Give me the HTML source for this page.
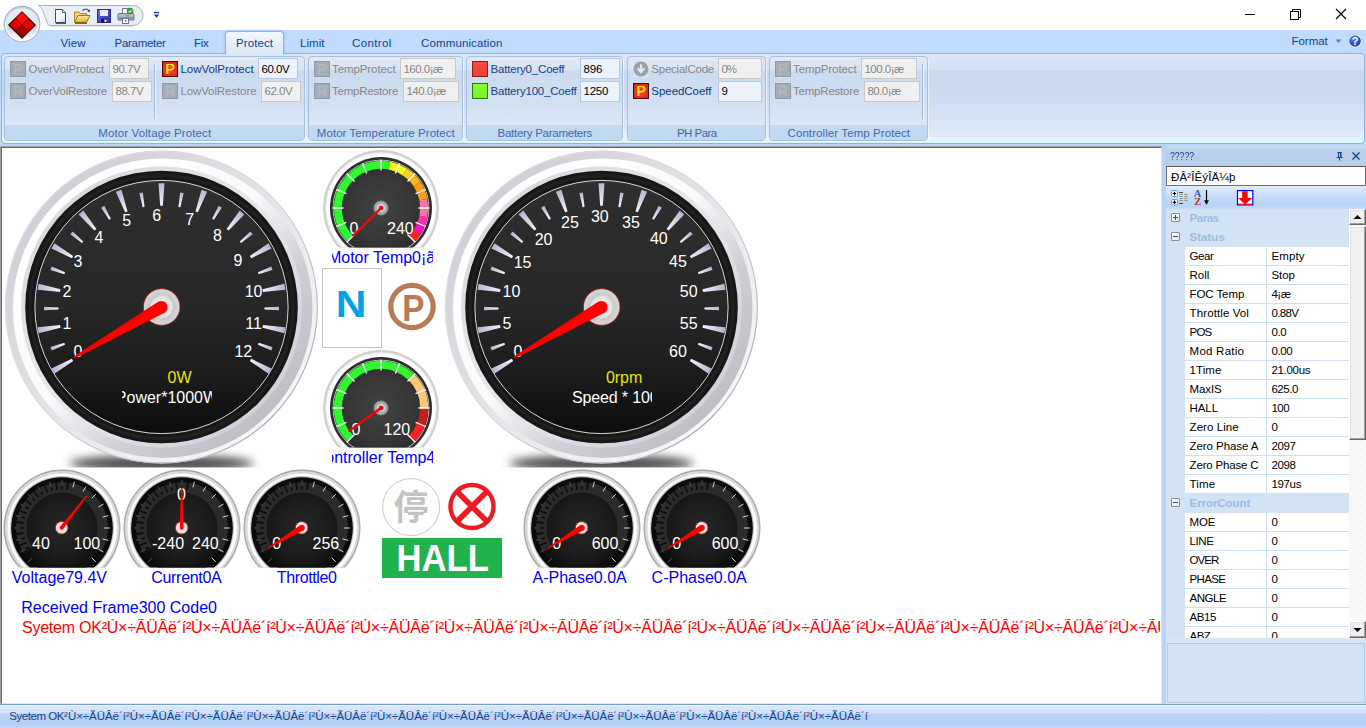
<!DOCTYPE html>
<html><head><meta charset="utf-8"><title>Controller</title>
<style>
*{box-sizing:border-box;margin:0;padding:0}
html,body{width:1366px;height:728px;overflow:hidden;background:#fff;font-family:"Liberation Sans",sans-serif;font-size:12px;color:#15428b}
div,span,svg{position:absolute}
.t{white-space:pre;height:16px;line-height:16px;font-size:11.5px;color:#15428b}
.t.dis{color:#878787}
.t.blk{color:#000}
.t.cap{color:#3e6aaa}
.t.b{color:#0f3a80}
.t.gh{color:#9ebce0;font-weight:bold}
.a16{font-size:16px;height:18px;line-height:18px;white-space:pre}
.blue{color:#0000ff}
.red{color:#ff0000}
#tabrow{left:0;top:30px;width:1366px;height:24px;background:#bfdbff}
#tabsel{left:225px;top:31px;width:59px;height:24px;border:1px solid #8db2e3;border-bottom:none;border-radius:4px 4px 0 0;background:linear-gradient(#f3f8fe,#e4edf9 55%,#dce8f6);box-shadow:0 0 3px rgba(120,160,220,.55)}
#tabsel:after{content:'';position:absolute;left:-3px;right:-3px;bottom:-1px;height:2px;background:linear-gradient(90deg,rgba(219,231,246,0),#dbe7f6 4px,#dbe7f6 calc(100% - 4px),rgba(219,231,246,0))}
#ribbon{left:0;top:53px;width:1366px;height:93px;background:#bfdbff}
#cat{left:1px;top:0px;width:1364px;height:91px;border:1px solid #8db2e3;border-radius:4px;background:linear-gradient(#dbe7f6 0,#d3e1f2 17%,#c8d9ee 19%,#cddcf0 50%,#dbe8f7 85%,#e5f3ff 96%,#d8f7ff 100%)}
.grp{top:56px;height:85px;border:1px solid #a5c0e0;border-radius:4px;background:linear-gradient(#e1eaf6 0,#d8e4f3 15%,#cbdbef 17%,#d0dff1 50%,#dbe7f5 80%,#dce8f6 100%);box-shadow:1px 1px 0 rgba(255,255,255,.55)}
.grp i{position:absolute;left:0;right:0;bottom:0;height:15px;background:#c3d8f1;border-radius:0 0 3px 3px}
.ed{height:21px;border:1px solid #b3c9e6;background:#ecf3fc}
.ed.dis{background:#f0f0f0;border-color:#c8c8c8}
.ico{width:16px;height:16px}
.ico.dis{background:#a6adb5;border:1px solid #939aa2;color:#b3bac1;font-size:14px;line-height:14px;text-align:center}
.pico{background:radial-gradient(circle at 50% 55%,#ff4a38,#e02c1e 70%,#c82418);border:1px solid #4a0c06;color:#ffee00;font-size:14px;line-height:14px;text-align:center;text-shadow:.3px 0 0 #ffee00}
.sep{width:1px;background:#9db9dc;box-shadow:1px 0 0 rgba(255,255,255,.7)}
#below{left:0;top:144px;width:1366px;height:561px;background:#bad4f8}
#main{left:0;top:146px;width:1162px;height:558px;background:#fff;border-top:1px solid #a0a0a0;border-left:1px solid #a0a0a0;overflow:hidden}
#main2{left:0;top:0;width:1161px;height:557px;border-top:1px solid #696969;border-left:1px solid #696969;border-right:1px solid #e3e3e3;border-bottom:1px solid #e3e3e3}
#status{left:0;top:704px;width:1366px;height:24px;border-top:1px solid #7a9cc9;background:linear-gradient(#ffffff 0,#d9e8fb 5%,#cfe1f9 35%,#b9d2f5 40%,#b5cff3 85%,#c3d8f5 100%)}
.yel{color:#e6e600}.wht{color:#fff}

#pcap{left:1166px;top:146px;width:200px;height:20px;background:linear-gradient(#c7d8ee,#bacfe9 20%,#b9cee8);border-top:1px solid #cfdef2}
#pedit{left:1166px;top:166px;width:200px;height:20px;background:#fff;border:1px solid #6f6f6f;border-top-color:#5a5a5a}
#ptool{left:1166px;top:186px;width:200px;height:23px;z-index:2;background:linear-gradient(#e0ecfb,#d0e1fa 30%,#bbd4f8 72%,#b9d3f8 88%,#c8dcfa)}
#pgrid{left:1166px;top:208px;width:183px;height:430px;background:#d3e3f3;overflow:hidden}
.prow{left:19px;width:164px;height:19px;background:#fff;border-bottom:1px solid #d0dff1}
.prow b{position:absolute;left:81px;top:0;width:1px;height:19px;background:#d0dff1}
.pbox{width:9px;height:9px;border:1px solid #8a8d92;background:linear-gradient(135deg,#fff,#e4e9f0);border-radius:1px}
.pbox:before{content:"";position:absolute;left:1px;top:3px;width:5px;height:1px;background:#2a489a}
.pbox.plus:after{content:"";position:absolute;left:3px;top:1px;width:1px;height:5px;background:#2a489a}
#pscroll{left:1349px;top:209px;width:17px;height:429px;background:#f2f2f2;background-image:linear-gradient(45deg,#fff 25%,transparent 25%,transparent 75%,#fff 75%),linear-gradient(45deg,#fff 25%,transparent 25%,transparent 75%,#fff 75%);background-size:2px 2px;background-position:0 0,1px 1px}
.sbtn{left:0;width:17px;background:#f0f0f0;border:1px solid;border-color:#fff #696969 #696969 #fff;box-shadow:inset -1px -1px 0 #a0a0a0,inset 1px 1px 0 #e3e3e3}
#pdesc{left:1166px;top:638px;width:200px;height:66px;background:#d8e5f5}
#pdesc i{position:absolute;left:1px;top:5px;width:198px;height:60px;border:1px solid #b4cae6;background:#d3e3f3}
</style></head><body>
<div id="tabrow"></div>
<div id="ribbon"><div id="cat"></div></div>
<div id="tabsel"></div>
<span class="t " style="left:60.4px;top:35px;letter-spacing:0.12px">View</span>
<span class="t " style="left:114.6px;top:35px;letter-spacing:-0.30px">Parameter</span>
<span class="t " style="left:194px;top:35px;letter-spacing:-0.25px">Fix</span>
<span class="t " style="left:236px;top:35px;letter-spacing:0.09px">Protect</span>
<span class="t " style="left:300px;top:35px;letter-spacing:0.06px">Limit</span>
<span class="t " style="left:352px;top:35px;letter-spacing:0.36px">Control</span>
<span class="t " style="left:421px;top:35px;letter-spacing:0.13px">Communication</span>
<span class="t " style="left:1291.6px;top:33px;letter-spacing:-0.07px">Format</span>
<div class="grp" style="left:4px;width:301px"><i></i></div>
<span class="t cap" style="left:98.2px;top:125px;letter-spacing:0.12px">Motor Voltage Protect</span>
<div class="grp" style="left:308px;width:155px"><i></i></div>
<span class="t cap" style="left:316.8px;top:125px;letter-spacing:0.06px">Motor Temperature Protect</span>
<div class="grp" style="left:466px;width:157px"><i></i></div>
<span class="t cap" style="left:497.5px;top:125px;letter-spacing:-0.25px">Battery Parameters</span>
<div class="grp" style="left:627px;width:139px"><i></i></div>
<span class="t cap" style="left:677.0px;top:125px;letter-spacing:-0.55px">PH Para</span>
<div class="grp" style="left:769px;width:159px"><i></i></div>
<span class="t cap" style="left:787.5px;top:125px;letter-spacing:0.09px">Controller Temp Protect</span>
<div class="ico dis" style="left:10px;top:61px">P</div>
<span class="t dis" style="left:28.4px;top:61px;letter-spacing:-0.12px">OverVolProtect</span>
<div class="ed dis" style="left:109px;top:58px;width:40px"></div>
<span class="t dis" style="left:112.5px;top:61px;letter-spacing:-0.49px">90.7V</span>
<div class="ico dis" style="left:10px;top:83px">R</div>
<span class="t dis" style="left:28.4px;top:83px;letter-spacing:-0.18px">OverVolRestore</span>
<div class="ed dis" style="left:112px;top:81px;width:40px"></div>
<span class="t dis" style="left:115.5px;top:83.2px;letter-spacing:-0.49px">88.7V</span>
<div class="sep" style="left:154px;top:64px;height:55px"></div>
<div class="ico pico" style="left:162px;top:61px">P</div>
<span class="t b" style="left:180.4px;top:61px;letter-spacing:-0.02px">LowVolProtect</span>
<div class="ed" style="left:258px;top:58px;width:40px"></div>
<span class="t blk" style="left:261.5px;top:61px;letter-spacing:-0.49px">60.0V</span>
<div class="ico dis" style="left:162px;top:83px">R</div>
<span class="t dis" style="left:180.4px;top:83px;letter-spacing:-0.10px">LowVolRestore</span>
<div class="ed dis" style="left:261px;top:81px;width:40px"></div>
<span class="t dis" style="left:264.5px;top:83.2px;letter-spacing:-0.49px">62.0V</span>
<div class="ico dis" style="left:314px;top:61px">P</div>
<span class="t dis" style="left:332px;top:61px;letter-spacing:-0.09px">TempProtect</span>
<div class="ed dis" style="left:400px;top:58px;width:56px"></div>
<span class="t dis" style="left:403.5px;top:61px;letter-spacing:-0.53px">160.0¡æ</span>
<div class="ico dis" style="left:314px;top:83px">R</div>
<span class="t dis" style="left:332px;top:83px;letter-spacing:-0.21px">TempRestore</span>
<div class="ed dis" style="left:403px;top:81px;width:56px"></div>
<span class="t dis" style="left:406.5px;top:83.2px;letter-spacing:-0.53px">140.0¡æ</span>
<div class="ico" style="left:472px;top:61px;background:linear-gradient(#ff4a3c,#f04034);border:1px solid #8a2018"></div>
<span class="t " style="left:490.5px;top:61px;letter-spacing:-0.19px">Battery0_Coeff</span>
<div class="ed" style="left:580px;top:58px;width:40px"></div>
<span class="t blk" style="left:583.5px;top:61px;letter-spacing:-0.20px">896</span>
<div class="ico" style="left:472px;top:83px;background:linear-gradient(#84ff34,#74f028);border:1px solid #2a7a10"></div>
<span class="t " style="left:490.5px;top:83px;letter-spacing:-0.21px">Battery100_Coeff</span>
<div class="ed" style="left:580px;top:81px;width:40px"></div>
<span class="t blk" style="left:583.5px;top:83.2px;letter-spacing:-0.25px">1250</span>
<svg class="ico" style="left:633px;top:61px" width="16" height="16" viewBox="0 0 16 16"><rect width="16" height="16" fill="#d9e4f2"/><circle cx="8" cy="8" r="7.6" fill="#9aa1a9"/><path d="M8 3.2v6.5M4.8 7.2l3.2 3.8 3.2-3.8" fill="none" stroke="#e4e9ef" stroke-width="2.2"/></svg>
<span class="t dis" style="left:651.3px;top:61px;letter-spacing:-0.23px">SpecialCode</span>
<div class="ed dis" style="left:718px;top:58px;width:44px"></div>
<span class="t dis" style="left:721.5px;top:61px;letter-spacing:-1.21px">0%</span>
<div class="ico pico" style="left:633px;top:83px">P</div>
<span class="t b" style="left:651.3px;top:83px;letter-spacing:-0.04px">SpeedCoeff</span>
<div class="ed" style="left:718px;top:81px;width:44px"></div>
<span class="t blk" style="left:721.5px;top:83.2px;letter-spacing:-0.10px">9</span>
<div class="ico dis" style="left:775px;top:61px">P</div>
<span class="t dis" style="left:793px;top:61px;letter-spacing:-0.09px">TempProtect</span>
<div class="ed dis" style="left:861px;top:58px;width:56px"></div>
<span class="t dis" style="left:864.5px;top:61px;letter-spacing:-0.53px">100.0¡æ</span>
<div class="ico dis" style="left:775px;top:83px">R</div>
<span class="t dis" style="left:793px;top:83px;letter-spacing:-0.21px">TempRestore</span>
<div class="ed dis" style="left:864px;top:81px;width:56px"></div>
<span class="t dis" style="left:867.5px;top:83.2px;letter-spacing:-0.56px">80.0¡æ</span>
<div class="sep" style="left:922px;top:64px;height:55px"></div>
<div id="below"></div>
<div id="main"><div id="main2"></div><div style="left:-1px;top:-147px;width:1366px;height:728px"><svg style="left:0;top:0" width="1366" height="728" viewBox="0 0 1366 728" font-family="Liberation Sans, sans-serif"><defs>
<linearGradient id="rimA" x1=".15" y1=".15" x2=".85" y2=".85"><stop offset="0" stop-color="#d2ced6"/><stop offset=".5" stop-color="#e6e4e8"/><stop offset="1" stop-color="#f6f6f8"/></linearGradient>
<linearGradient id="rimE" x1=".15" y1=".15" x2=".85" y2=".85"><stop offset="0" stop-color="#dedae2"/><stop offset=".5" stop-color="#dcdae0"/><stop offset="1" stop-color="#b2aeb6"/></linearGradient>
<linearGradient id="rimB" x1=".15" y1=".15" x2=".85" y2=".85"><stop offset="0" stop-color="#ffffff"/><stop offset=".45" stop-color="#fafafb"/><stop offset=".72" stop-color="#d2ced6"/><stop offset="1" stop-color="#c2bec6"/></linearGradient>
<linearGradient id="rimC" x1=".15" y1=".15" x2=".85" y2=".85"><stop offset="0" stop-color="#dcdce0"/><stop offset=".5" stop-color="#e8e8ec"/><stop offset="1" stop-color="#d4d0d8"/></linearGradient>
<linearGradient id="face" x1="0" y1="0" x2="0" y2="1"><stop offset="0" stop-color="#2f2f2f"/><stop offset=".5" stop-color="#272727"/><stop offset=".8" stop-color="#1a1a1a"/><stop offset="1" stop-color="#0c0c0c"/></linearGradient>
<linearGradient id="tick" x1="0" y1="0" x2="1" y2="0"><stop offset="0" stop-color="#f4f4fa"/><stop offset="1" stop-color="#b4b4d0"/></linearGradient>
<radialGradient id="hub" cx=".5" cy=".5" r=".5"><stop offset="0" stop-color="#f0f0f0"/><stop offset=".55" stop-color="#e4e4e4"/><stop offset=".66" stop-color="#cacaca"/><stop offset="1" stop-color="#d8d8d8"/></radialGradient>
<radialGradient id="mface" cx=".5" cy=".5" r=".5"><stop offset="0" stop-color="#424242"/><stop offset=".7" stop-color="#363636"/><stop offset="1" stop-color="#2c2c2c"/></radialGradient>
<radialGradient id="sface" cx=".5" cy=".5" r=".5"><stop offset="0" stop-color="#262626"/><stop offset=".6" stop-color="#1c1c1c"/><stop offset="1" stop-color="#0c0c0c"/></radialGradient>
<filter id="blur" x="-20%" y="-100%" width="140%" height="300%"><feGaussianBlur stdDeviation="5"/></filter>
<clipPath id="cb1"><rect x="2" y="148" width="318" height="319.500"/></clipPath>
<clipPath id="cb2"><rect x="442" y="148" width="318" height="319.500"/></clipPath>
<clipPath id="cm1"><rect x="322" y="148" width="118" height="99.500"/></clipPath>
<clipPath id="cm2"><rect x="322" y="348" width="118" height="99.500"/></clipPath>
<clipPath id="cs"><rect x="2" y="468" width="760" height="99.500"/></clipPath>
</defs>
<g clip-path="url(#cb1)">
<ellipse cx="161.5" cy="463.5" rx="92" ry="8.500" fill="#4c4c4c" filter="url(#blur)"/>
<circle cx="161.5" cy="307" r="156.500" fill="url(#rimA)"/>
<circle cx="161.5" cy="307" r="155.900" fill="none" stroke="url(#rimE)" stroke-width="1.200"/>
<circle cx="162.7" cy="308.2" r="149.800" fill="url(#rimB)"/>
<circle cx="161.5" cy="307" r="138.300" fill="none" stroke="url(#rimC)" stroke-width="4.500"/>
<circle cx="161.5" cy="307" r="136.300" fill="#171717"/>
<circle cx="161.5" cy="307" r="131.500" fill="none" stroke="#202020" stroke-width="3"/>
<circle cx="161.5" cy="307" r="126.600" fill="url(#face)" stroke="#ececec" stroke-width=".9"/>
<polygon points="125.3,-3.0 125.3,3.0 102.8,1.3 102.8,-1.3" transform="translate(161.5,308.5) rotate(-210)" fill="url(#tick)"/>
<polygon points="117.5,-1.8 117.5,1.8 103,1.0 103,-1.0" transform="translate(161.5,308.5) rotate(-200)" fill="url(#tick)"/>
<polygon points="125.3,-3.0 125.3,3.0 102.8,1.3 102.8,-1.3" transform="translate(161.5,308.5) rotate(-190)" fill="url(#tick)"/>
<polygon points="117.5,-1.8 117.5,1.8 103,1.0 103,-1.0" transform="translate(161.5,308.5) rotate(-180)" fill="url(#tick)"/>
<polygon points="125.3,-3.0 125.3,3.0 102.8,1.3 102.8,-1.3" transform="translate(161.5,308.5) rotate(-170)" fill="url(#tick)"/>
<polygon points="117.5,-1.8 117.5,1.8 103,1.0 103,-1.0" transform="translate(161.5,308.5) rotate(-160)" fill="url(#tick)"/>
<polygon points="125.3,-3.0 125.3,3.0 102.8,1.3 102.8,-1.3" transform="translate(161.5,308.5) rotate(-150)" fill="url(#tick)"/>
<polygon points="117.5,-1.8 117.5,1.8 103,1.0 103,-1.0" transform="translate(161.5,308.5) rotate(-140)" fill="url(#tick)"/>
<polygon points="125.3,-3.0 125.3,3.0 102.8,1.3 102.8,-1.3" transform="translate(161.5,308.5) rotate(-130)" fill="url(#tick)"/>
<polygon points="117.5,-1.8 117.5,1.8 103,1.0 103,-1.0" transform="translate(161.5,308.5) rotate(-120)" fill="url(#tick)"/>
<polygon points="125.3,-3.0 125.3,3.0 102.8,1.3 102.8,-1.3" transform="translate(161.5,308.5) rotate(-110)" fill="url(#tick)"/>
<polygon points="117.5,-1.8 117.5,1.8 103,1.0 103,-1.0" transform="translate(161.5,308.5) rotate(-100)" fill="url(#tick)"/>
<polygon points="125.3,-3.0 125.3,3.0 102.8,1.3 102.8,-1.3" transform="translate(161.5,308.5) rotate(-90)" fill="url(#tick)"/>
<polygon points="117.5,-1.8 117.5,1.8 103,1.0 103,-1.0" transform="translate(161.5,308.5) rotate(-80)" fill="url(#tick)"/>
<polygon points="125.3,-3.0 125.3,3.0 102.8,1.3 102.8,-1.3" transform="translate(161.5,308.5) rotate(-70)" fill="url(#tick)"/>
<polygon points="117.5,-1.8 117.5,1.8 103,1.0 103,-1.0" transform="translate(161.5,308.5) rotate(-60)" fill="url(#tick)"/>
<polygon points="125.3,-3.0 125.3,3.0 102.8,1.3 102.8,-1.3" transform="translate(161.5,308.5) rotate(-50)" fill="url(#tick)"/>
<polygon points="117.5,-1.8 117.5,1.8 103,1.0 103,-1.0" transform="translate(161.5,308.5) rotate(-40)" fill="url(#tick)"/>
<polygon points="125.3,-3.0 125.3,3.0 102.8,1.3 102.8,-1.3" transform="translate(161.5,308.5) rotate(-30)" fill="url(#tick)"/>
<polygon points="117.5,-1.8 117.5,1.8 103,1.0 103,-1.0" transform="translate(161.5,308.5) rotate(-20)" fill="url(#tick)"/>
<polygon points="125.3,-3.0 125.3,3.0 102.8,1.3 102.8,-1.3" transform="translate(161.5,308.5) rotate(-10)" fill="url(#tick)"/>
<polygon points="117.5,-1.8 117.5,1.8 103,1.0 103,-1.0" transform="translate(161.5,308.5) rotate(0)" fill="url(#tick)"/>
<polygon points="125.3,-3.0 125.3,3.0 102.8,1.3 102.8,-1.3" transform="translate(161.5,308.5) rotate(10)" fill="url(#tick)"/>
<polygon points="117.5,-1.8 117.5,1.8 103,1.0 103,-1.0" transform="translate(161.5,308.5) rotate(20)" fill="url(#tick)"/>
<polygon points="125.3,-3.0 125.3,3.0 102.8,1.3 102.8,-1.3" transform="translate(161.5,308.5) rotate(30)" fill="url(#tick)"/>
<text x="78" y="356.8" text-anchor="middle" font-size="16" fill="#fff">0</text>
<text x="67" y="328.5" text-anchor="middle" font-size="16" fill="#fff">1</text>
<text x="67" y="296.8" text-anchor="middle" font-size="16" fill="#fff">2</text>
<text x="78" y="266.8" text-anchor="middle" font-size="16" fill="#fff">3</text>
<text x="99" y="242.8" text-anchor="middle" font-size="16" fill="#fff">4</text>
<text x="126.8" y="225.8" text-anchor="middle" font-size="16" fill="#fff">5</text>
<text x="156.7" y="220.8" text-anchor="middle" font-size="16" fill="#fff">6</text>
<text x="189.7" y="224.5" text-anchor="middle" font-size="16" fill="#fff">7</text>
<text x="217.4" y="241.4" text-anchor="middle" font-size="16" fill="#fff">8</text>
<text x="238" y="265.5" text-anchor="middle" font-size="16" fill="#fff">9</text>
<text x="253.6" y="296.8" text-anchor="middle" font-size="16" fill="#fff">10</text>
<text x="253.6" y="328.5" text-anchor="middle" font-size="16" fill="#fff">11</text>
<text x="243.3" y="357.1" text-anchor="middle" font-size="16" fill="#fff">12</text>
<circle cx="161.7" cy="307" r="18.300" fill="url(#hub)" stroke="#a01818" stroke-width=".8"/>
<path d="M158.6 301.5 L73.8 356.6 L74.8 358.4 L165.0 312.5 A6.4 6.4 0 0 0 158.6 301.5 Z" fill="#ff0000"/>
</g>
<g clip-path="url(#cb2)">
<ellipse cx="601.5" cy="463.5" rx="92" ry="8.500" fill="#4c4c4c" filter="url(#blur)"/>
<circle cx="601.5" cy="307" r="156.500" fill="url(#rimA)"/>
<circle cx="601.5" cy="307" r="155.900" fill="none" stroke="url(#rimE)" stroke-width="1.200"/>
<circle cx="602.7" cy="308.2" r="149.800" fill="url(#rimB)"/>
<circle cx="601.5" cy="307" r="138.300" fill="none" stroke="url(#rimC)" stroke-width="4.500"/>
<circle cx="601.5" cy="307" r="136.300" fill="#171717"/>
<circle cx="601.5" cy="307" r="131.500" fill="none" stroke="#202020" stroke-width="3"/>
<circle cx="601.5" cy="307" r="126.600" fill="url(#face)" stroke="#ececec" stroke-width=".9"/>
<polygon points="125.3,-3.0 125.3,3.0 102.8,1.3 102.8,-1.3" transform="translate(601.5,308.5) rotate(-210)" fill="url(#tick)"/>
<polygon points="117.5,-1.8 117.5,1.8 103,1.0 103,-1.0" transform="translate(601.5,308.5) rotate(-200)" fill="url(#tick)"/>
<polygon points="125.3,-3.0 125.3,3.0 102.8,1.3 102.8,-1.3" transform="translate(601.5,308.5) rotate(-190)" fill="url(#tick)"/>
<polygon points="117.5,-1.8 117.5,1.8 103,1.0 103,-1.0" transform="translate(601.5,308.5) rotate(-180)" fill="url(#tick)"/>
<polygon points="125.3,-3.0 125.3,3.0 102.8,1.3 102.8,-1.3" transform="translate(601.5,308.5) rotate(-170)" fill="url(#tick)"/>
<polygon points="117.5,-1.8 117.5,1.8 103,1.0 103,-1.0" transform="translate(601.5,308.5) rotate(-160)" fill="url(#tick)"/>
<polygon points="125.3,-3.0 125.3,3.0 102.8,1.3 102.8,-1.3" transform="translate(601.5,308.5) rotate(-150)" fill="url(#tick)"/>
<polygon points="117.5,-1.8 117.5,1.8 103,1.0 103,-1.0" transform="translate(601.5,308.5) rotate(-140)" fill="url(#tick)"/>
<polygon points="125.3,-3.0 125.3,3.0 102.8,1.3 102.8,-1.3" transform="translate(601.5,308.5) rotate(-130)" fill="url(#tick)"/>
<polygon points="117.5,-1.8 117.5,1.8 103,1.0 103,-1.0" transform="translate(601.5,308.5) rotate(-120)" fill="url(#tick)"/>
<polygon points="125.3,-3.0 125.3,3.0 102.8,1.3 102.8,-1.3" transform="translate(601.5,308.5) rotate(-110)" fill="url(#tick)"/>
<polygon points="117.5,-1.8 117.5,1.8 103,1.0 103,-1.0" transform="translate(601.5,308.5) rotate(-100)" fill="url(#tick)"/>
<polygon points="125.3,-3.0 125.3,3.0 102.8,1.3 102.8,-1.3" transform="translate(601.5,308.5) rotate(-90)" fill="url(#tick)"/>
<polygon points="117.5,-1.8 117.5,1.8 103,1.0 103,-1.0" transform="translate(601.5,308.5) rotate(-80)" fill="url(#tick)"/>
<polygon points="125.3,-3.0 125.3,3.0 102.8,1.3 102.8,-1.3" transform="translate(601.5,308.5) rotate(-70)" fill="url(#tick)"/>
<polygon points="117.5,-1.8 117.5,1.8 103,1.0 103,-1.0" transform="translate(601.5,308.5) rotate(-60)" fill="url(#tick)"/>
<polygon points="125.3,-3.0 125.3,3.0 102.8,1.3 102.8,-1.3" transform="translate(601.5,308.5) rotate(-50)" fill="url(#tick)"/>
<polygon points="117.5,-1.8 117.5,1.8 103,1.0 103,-1.0" transform="translate(601.5,308.5) rotate(-40)" fill="url(#tick)"/>
<polygon points="125.3,-3.0 125.3,3.0 102.8,1.3 102.8,-1.3" transform="translate(601.5,308.5) rotate(-30)" fill="url(#tick)"/>
<polygon points="117.5,-1.8 117.5,1.8 103,1.0 103,-1.0" transform="translate(601.5,308.5) rotate(-20)" fill="url(#tick)"/>
<polygon points="125.3,-3.0 125.3,3.0 102.8,1.3 102.8,-1.3" transform="translate(601.5,308.5) rotate(-10)" fill="url(#tick)"/>
<polygon points="117.5,-1.8 117.5,1.8 103,1.0 103,-1.0" transform="translate(601.5,308.5) rotate(0)" fill="url(#tick)"/>
<polygon points="125.3,-3.0 125.3,3.0 102.8,1.3 102.8,-1.3" transform="translate(601.5,308.5) rotate(10)" fill="url(#tick)"/>
<polygon points="117.5,-1.8 117.5,1.8 103,1.0 103,-1.0" transform="translate(601.5,308.5) rotate(20)" fill="url(#tick)"/>
<polygon points="125.3,-3.0 125.3,3.0 102.8,1.3 102.8,-1.3" transform="translate(601.5,308.5) rotate(30)" fill="url(#tick)"/>
<text x="518" y="356.8" text-anchor="middle" font-size="16" fill="#fff">0</text>
<text x="507" y="328.5" text-anchor="middle" font-size="16" fill="#fff">5</text>
<text x="511.4" y="296.8" text-anchor="middle" font-size="16" fill="#fff">10</text>
<text x="522.6" y="268.2" text-anchor="middle" font-size="16" fill="#fff">15</text>
<text x="543.6" y="244.6" text-anchor="middle" font-size="16" fill="#fff">20</text>
<text x="570" y="228.0" text-anchor="middle" font-size="16" fill="#fff">25</text>
<text x="599.8" y="222.2" text-anchor="middle" font-size="16" fill="#fff">30</text>
<text x="631" y="228.0" text-anchor="middle" font-size="16" fill="#fff">35</text>
<text x="658.8" y="243.7" text-anchor="middle" font-size="16" fill="#fff">40</text>
<text x="678" y="266.8" text-anchor="middle" font-size="16" fill="#fff">45</text>
<text x="688.7" y="296.8" text-anchor="middle" font-size="16" fill="#fff">50</text>
<text x="688.7" y="328.5" text-anchor="middle" font-size="16" fill="#fff">55</text>
<text x="678" y="357.1" text-anchor="middle" font-size="16" fill="#fff">60</text>
<circle cx="601.7" cy="307" r="18.300" fill="url(#hub)" stroke="#a01818" stroke-width=".8"/>
<path d="M598.6 301.5 L513.8 356.6 L514.8 358.4 L605.0 312.5 A6.4 6.4 0 0 0 598.6 301.5 Z" fill="#ff0000"/>
</g>
<g clip-path="url(#cm1)">
<circle cx="381" cy="208" r="57.900" fill="#d0d0d0"/>
<circle cx="381" cy="208" r="55.700" fill="#ececec"/>
<circle cx="381" cy="208" r="54.400" fill="#ffffff"/>
<circle cx="381" cy="208" r="51" fill="#2e2e2e"/>
<circle cx="381" cy="208" r="48.300" fill="#dcdcdc"/>
<circle cx="381" cy="208" r="47.600" fill="url(#mface)"/>
<path d="M347.62 241.38 A47.2 47.2 0 0 1 390.21 161.71 L388.65 169.55 A39.2 39.2 0 0 0 353.28 235.72 Z" fill="#30f630"/>
<path d="M390.21 161.71 A47.2 47.2 0 0 1 407.22 168.75 L402.78 175.41 A39.2 39.2 0 0 0 388.65 169.55 Z" fill="#f4f424"/>
<path d="M407.22 168.75 A47.2 47.2 0 0 1 414.38 174.62 L408.72 180.28 A39.2 39.2 0 0 0 402.78 175.41 Z" fill="#f8d020"/>
<path d="M414.38 174.62 A47.2 47.2 0 0 1 420.25 181.78 L413.59 186.22 A39.2 39.2 0 0 0 408.72 180.28 Z" fill="#fcb818"/>
<path d="M420.25 181.78 A47.2 47.2 0 0 1 427.29 198.79 L419.45 200.35 A39.2 39.2 0 0 0 413.59 186.22 Z" fill="#ff9c14"/>
<path d="M427.29 198.79 A47.2 47.2 0 0 1 427.29 217.21 L419.45 215.65 A39.2 39.2 0 0 0 419.45 200.35 Z" fill="#ff74a4"/>
<path d="M427.29 217.21 A47.2 47.2 0 0 1 424.61 226.06 L417.22 223.00 A39.2 39.2 0 0 0 419.45 215.65 Z" fill="#ff30b0"/>
<path d="M424.61 226.06 A47.2 47.2 0 0 1 420.25 234.22 L413.59 229.78 A39.2 39.2 0 0 0 417.22 223.00 Z" fill="#ff10c8"/>
<path d="M420.25 234.22 A47.2 47.2 0 0 1 414.38 241.38 L408.72 235.72 A39.2 39.2 0 0 0 413.59 229.78 Z" fill="#ff2020"/>
<path d="M354.5 234.5 L346.8 242.2" stroke="#fff" stroke-width="1.300"/>
<path d="M346.4 222.4 L336.4 226.5" stroke="#fff" stroke-width="1.300"/>
<path d="M343.5 208.0 L332.7 208.0" stroke="#fff" stroke-width="1.300"/>
<path d="M346.4 193.6 L336.4 189.5" stroke="#fff" stroke-width="1.300"/>
<path d="M354.5 181.5 L346.8 173.8" stroke="#fff" stroke-width="1.300"/>
<path d="M366.6 173.4 L362.5 163.4" stroke="#fff" stroke-width="1.300"/>
<path d="M381.0 170.5 L381.0 159.7" stroke="#fff" stroke-width="1.300"/>
<path d="M395.4 173.4 L399.5 163.4" stroke="#fff" stroke-width="1.300"/>
<path d="M407.5 181.5 L415.2 173.8" stroke="#fff" stroke-width="1.300"/>
<path d="M415.6 193.6 L425.6 189.5" stroke="#fff" stroke-width="1.300"/>
<path d="M418.5 208.0 L429.3 208.0" stroke="#fff" stroke-width="1.300"/>
<path d="M415.6 222.4 L425.6 226.5" stroke="#fff" stroke-width="1.300"/>
<path d="M407.5 234.5 L415.2 242.2" stroke="#fff" stroke-width="1.300"/>
<text x="349.5" y="234.3" font-size="16" fill="#fff">0</text>
<text x="387" y="234.3" font-size="16" fill="#fff">240</text>
<circle cx="381" cy="208" r="7" fill="#acacac" stroke="#8a8a8a" stroke-width="1"/>
<circle cx="381" cy="208" r="4.300" fill="#cccccc"/>
<path d="M381 208 L353.4 235.6" stroke="#ff0000" stroke-width="2.400" stroke-linecap="round"/>
<circle cx="381" cy="208" r="2.200" fill="#ff0000"/>
</g>
<g clip-path="url(#cm2)">
<circle cx="381" cy="408" r="57.900" fill="#d0d0d0"/>
<circle cx="381" cy="408" r="55.700" fill="#ececec"/>
<circle cx="381" cy="408" r="54.400" fill="#ffffff"/>
<circle cx="381" cy="408" r="51" fill="#2e2e2e"/>
<circle cx="381" cy="408" r="48.300" fill="#dcdcdc"/>
<circle cx="381" cy="408" r="47.600" fill="url(#mface)"/>
<path d="M347.62 441.38 A47.2 47.2 0 0 1 414.38 374.62 L408.72 380.28 A39.2 39.2 0 0 0 353.28 435.72 Z" fill="#30f630"/>
<path d="M414.38 374.62 A47.2 47.2 0 0 1 428.20 408.00 L420.20 408.00 A39.2 39.2 0 0 0 408.72 380.28 Z" fill="#fcc878"/>
<path d="M428.20 408.00 A47.2 47.2 0 0 1 424.61 426.06 L417.22 423.00 A39.2 39.2 0 0 0 420.20 408.00 Z" fill="#c42020"/>
<path d="M424.61 426.06 A47.2 47.2 0 0 1 414.38 441.38 L408.72 435.72 A39.2 39.2 0 0 0 417.22 423.00 Z" fill="#ff2020"/>
<path d="M354.5 434.5 L346.8 442.2" stroke="#fff" stroke-width="1.300"/>
<path d="M346.4 422.4 L336.4 426.5" stroke="#fff" stroke-width="1.300"/>
<path d="M343.5 408.0 L332.7 408.0" stroke="#fff" stroke-width="1.300"/>
<path d="M346.4 393.6 L336.4 389.5" stroke="#fff" stroke-width="1.300"/>
<path d="M354.5 381.5 L346.8 373.8" stroke="#fff" stroke-width="1.300"/>
<path d="M366.6 373.4 L362.5 363.4" stroke="#fff" stroke-width="1.300"/>
<path d="M381.0 370.5 L381.0 359.7" stroke="#fff" stroke-width="1.300"/>
<path d="M395.4 373.4 L399.5 363.4" stroke="#fff" stroke-width="1.300"/>
<path d="M407.5 381.5 L415.2 373.8" stroke="#fff" stroke-width="1.300"/>
<path d="M415.6 393.6 L425.6 389.5" stroke="#fff" stroke-width="1.300"/>
<path d="M418.5 408.0 L429.3 408.0" stroke="#fff" stroke-width="1.300"/>
<path d="M415.6 422.4 L425.6 426.5" stroke="#fff" stroke-width="1.300"/>
<path d="M407.5 434.5 L415.2 442.2" stroke="#fff" stroke-width="1.300"/>
<text x="351.5" y="435" font-size="16" fill="#fff">0</text>
<text x="383.5" y="435" font-size="16" fill="#fff">120</text>
<circle cx="381" cy="408" r="7" fill="#acacac" stroke="#8a8a8a" stroke-width="1"/>
<circle cx="381" cy="408" r="4.300" fill="#cccccc"/>
<path d="M381 408 L349.4 430.9" stroke="#ff0000" stroke-width="2.400" stroke-linecap="round"/>
<circle cx="381" cy="408" r="2.200" fill="#ff0000"/>
</g>
<g clip-path="url(#cs)">
<circle cx="62" cy="528" r="58.500" fill="#a8a8ac"/>
<circle cx="62" cy="528" r="57.100" fill="#d8d8da"/>
<circle cx="62.3" cy="528.3" r="54.800" fill="#fcfcfc"/>
<circle cx="62" cy="528" r="52" fill="#c4c4c8"/>
<circle cx="62" cy="528" r="50.800" fill="#0b0b0b"/>
<circle cx="62" cy="528" r="46.500" fill="url(#sface)"/>
<path d="M22.99 552.38 A46 46 0 1 1 101.01 552.38 L92.11 546.81 A35.5 35.5 0 1 0 31.89 546.81 Z" fill="#2b2b2b"/>
<path d="M34.8 555.2 L29.3 560.7" stroke="#0a0a0a" stroke-width="1.600"/>
<path d="M32.3 557.7 L28.2 561.8" stroke="#b4b4dc" stroke-width=".8" stroke-opacity=".55"/>
<path d="M31.5 551.4 L25.3 556.2" stroke="#0a0a0a" stroke-width="1.800" stroke-opacity=".85"/>
<path d="M28.7 547.2 L21.9 551.1" stroke="#0a0a0a" stroke-width="1.600"/>
<path d="M25.6 549.0 L20.6 551.9" stroke="#b4b4dc" stroke-width=".8" stroke-opacity=".55"/>
<path d="M26.4 542.7 L19.2 545.7" stroke="#0a0a0a" stroke-width="1.800" stroke-opacity=".85"/>
<path d="M24.8 538.0 L17.3 540.0" stroke="#0a0a0a" stroke-width="1.600"/>
<path d="M21.4 538.9 L15.8 540.4" stroke="#b4b4dc" stroke-width=".8" stroke-opacity=".55"/>
<path d="M23.8 533.0 L16.1 534.0" stroke="#0a0a0a" stroke-width="1.800" stroke-opacity=".85"/>
<path d="M23.5 528.0 L15.7 528.0" stroke="#0a0a0a" stroke-width="1.600"/>
<path d="M20.0 528.0 L14.2 528.0" stroke="#b4b4dc" stroke-width=".8" stroke-opacity=".55"/>
<path d="M23.8 523.0 L16.1 522.0" stroke="#0a0a0a" stroke-width="1.800" stroke-opacity=".85"/>
<path d="M24.8 518.0 L17.3 516.0" stroke="#0a0a0a" stroke-width="1.600"/>
<path d="M21.4 517.1 L15.8 515.6" stroke="#b4b4dc" stroke-width=".8" stroke-opacity=".55"/>
<path d="M26.4 513.3 L19.2 510.3" stroke="#0a0a0a" stroke-width="1.800" stroke-opacity=".85"/>
<path d="M28.7 508.8 L21.9 504.9" stroke="#0a0a0a" stroke-width="1.600"/>
<path d="M25.6 507.0 L20.6 504.1" stroke="#b4b4dc" stroke-width=".8" stroke-opacity=".55"/>
<path d="M31.5 504.6 L25.3 499.8" stroke="#0a0a0a" stroke-width="1.800" stroke-opacity=".85"/>
<path d="M34.8 500.8 L29.3 495.3" stroke="#0a0a0a" stroke-width="1.600"/>
<path d="M32.3 498.3 L28.2 494.2" stroke="#b4b4dc" stroke-width=".8" stroke-opacity=".55"/>
<path d="M38.6 497.5 L33.8 491.3" stroke="#0a0a0a" stroke-width="1.800" stroke-opacity=".85"/>
<path d="M42.8 494.7 L38.9 487.9" stroke="#0a0a0a" stroke-width="1.600"/>
<path d="M41.0 491.6 L38.1 486.6" stroke="#b4b4dc" stroke-width=".8" stroke-opacity=".55"/>
<path d="M47.3 492.4 L44.3 485.2" stroke="#0a0a0a" stroke-width="1.800" stroke-opacity=".85"/>
<path d="M52.0 490.8 L50.0 483.3" stroke="#0a0a0a" stroke-width="1.600"/>
<path d="M51.1 487.4 L49.6 481.8" stroke="#b4b4dc" stroke-width=".8" stroke-opacity=".55"/>
<path d="M57.0 489.8 L56.0 482.1" stroke="#0a0a0a" stroke-width="1.800" stroke-opacity=".85"/>
<path d="M62.0 489.5 L62.0 481.7" stroke="#0a0a0a" stroke-width="1.600"/>
<path d="M62.0 486.0 L62.0 480.2" stroke="#b4b4dc" stroke-width=".8" stroke-opacity=".55"/>
<path d="M67.0 489.8 L68.0 482.1" stroke="#0a0a0a" stroke-width="1.800" stroke-opacity=".85"/>
<path d="M72.9 487.4 L74.4 481.8" stroke="#ececf4" stroke-width="1" stroke-opacity=".9"/>
<path d="M83.0 491.6 L85.9 486.6" stroke="#ececf4" stroke-width="1" stroke-opacity=".9"/>
<path d="M91.7 498.3 L95.8 494.2" stroke="#ececf4" stroke-width="1" stroke-opacity=".9"/>
<path d="M98.4 507.0 L103.4 504.1" stroke="#ececf4" stroke-width="1" stroke-opacity=".9"/>
<path d="M102.6 517.1 L108.2 515.6" stroke="#ececf4" stroke-width="1" stroke-opacity=".9"/>
<path d="M104.0 528.0 L109.8 528.0" stroke="#ececf4" stroke-width="1" stroke-opacity=".9"/>
<path d="M102.6 538.9 L108.2 540.4" stroke="#ececf4" stroke-width="1" stroke-opacity=".9"/>
<path d="M98.4 549.0 L103.4 551.9" stroke="#ececf4" stroke-width="1" stroke-opacity=".9"/>
<path d="M91.7 557.7 L95.8 561.8" stroke="#ececf4" stroke-width="1" stroke-opacity=".9"/>
<text x="32" y="548.8" font-size="16" fill="#fff">40</text>
<text x="73.5" y="548.8" font-size="16" fill="#fff">100</text>
<circle cx="61.7" cy="527.8" r="6.300" fill="#e4e4e4" stroke="#c01818" stroke-width=".9"/>
<path d="M63.2 529.0 L87.2 496.3 L86.1 495.5 L60.2 526.6 A1.9 1.9 0 0 0 63.2 529.0 Z" fill="#ff0000"/>
</g>
<g clip-path="url(#cs)">
<circle cx="182" cy="528" r="58.500" fill="#a8a8ac"/>
<circle cx="182" cy="528" r="57.100" fill="#d8d8da"/>
<circle cx="182.3" cy="528.3" r="54.800" fill="#fcfcfc"/>
<circle cx="182" cy="528" r="52" fill="#c4c4c8"/>
<circle cx="182" cy="528" r="50.800" fill="#0b0b0b"/>
<circle cx="182" cy="528" r="46.500" fill="url(#sface)"/>
<path d="M142.99 552.38 A46 46 0 1 1 221.01 552.38 L212.11 546.81 A35.5 35.5 0 1 0 151.89 546.81 Z" fill="#2b2b2b"/>
<path d="M154.8 555.2 L149.3 560.7" stroke="#0a0a0a" stroke-width="1.600"/>
<path d="M152.3 557.7 L148.2 561.8" stroke="#b4b4dc" stroke-width=".8" stroke-opacity=".55"/>
<path d="M151.5 551.4 L145.3 556.2" stroke="#0a0a0a" stroke-width="1.800" stroke-opacity=".85"/>
<path d="M148.7 547.2 L141.9 551.1" stroke="#0a0a0a" stroke-width="1.600"/>
<path d="M145.6 549.0 L140.6 551.9" stroke="#b4b4dc" stroke-width=".8" stroke-opacity=".55"/>
<path d="M146.4 542.7 L139.2 545.7" stroke="#0a0a0a" stroke-width="1.800" stroke-opacity=".85"/>
<path d="M144.8 538.0 L137.3 540.0" stroke="#0a0a0a" stroke-width="1.600"/>
<path d="M141.4 538.9 L135.8 540.4" stroke="#b4b4dc" stroke-width=".8" stroke-opacity=".55"/>
<path d="M143.8 533.0 L136.1 534.0" stroke="#0a0a0a" stroke-width="1.800" stroke-opacity=".85"/>
<path d="M143.5 528.0 L135.7 528.0" stroke="#0a0a0a" stroke-width="1.600"/>
<path d="M140.0 528.0 L134.2 528.0" stroke="#b4b4dc" stroke-width=".8" stroke-opacity=".55"/>
<path d="M143.8 523.0 L136.1 522.0" stroke="#0a0a0a" stroke-width="1.800" stroke-opacity=".85"/>
<path d="M144.8 518.0 L137.3 516.0" stroke="#0a0a0a" stroke-width="1.600"/>
<path d="M141.4 517.1 L135.8 515.6" stroke="#b4b4dc" stroke-width=".8" stroke-opacity=".55"/>
<path d="M146.4 513.3 L139.2 510.3" stroke="#0a0a0a" stroke-width="1.800" stroke-opacity=".85"/>
<path d="M148.7 508.8 L141.9 504.9" stroke="#0a0a0a" stroke-width="1.600"/>
<path d="M145.6 507.0 L140.6 504.1" stroke="#b4b4dc" stroke-width=".8" stroke-opacity=".55"/>
<path d="M151.5 504.6 L145.3 499.8" stroke="#0a0a0a" stroke-width="1.800" stroke-opacity=".85"/>
<path d="M154.8 500.8 L149.3 495.3" stroke="#0a0a0a" stroke-width="1.600"/>
<path d="M152.3 498.3 L148.2 494.2" stroke="#b4b4dc" stroke-width=".8" stroke-opacity=".55"/>
<path d="M158.6 497.5 L153.8 491.3" stroke="#0a0a0a" stroke-width="1.800" stroke-opacity=".85"/>
<path d="M162.8 494.7 L158.9 487.9" stroke="#0a0a0a" stroke-width="1.600"/>
<path d="M161.0 491.6 L158.1 486.6" stroke="#b4b4dc" stroke-width=".8" stroke-opacity=".55"/>
<path d="M167.3 492.4 L164.3 485.2" stroke="#0a0a0a" stroke-width="1.800" stroke-opacity=".85"/>
<path d="M172.0 490.8 L170.0 483.3" stroke="#0a0a0a" stroke-width="1.600"/>
<path d="M171.1 487.4 L169.6 481.8" stroke="#b4b4dc" stroke-width=".8" stroke-opacity=".55"/>
<path d="M177.0 489.8 L176.0 482.1" stroke="#0a0a0a" stroke-width="1.800" stroke-opacity=".85"/>
<path d="M182.0 489.5 L182.0 481.7" stroke="#0a0a0a" stroke-width="1.600"/>
<path d="M182.0 486.0 L182.0 480.2" stroke="#b4b4dc" stroke-width=".8" stroke-opacity=".55"/>
<path d="M187.0 489.8 L188.0 482.1" stroke="#0a0a0a" stroke-width="1.800" stroke-opacity=".85"/>
<path d="M192.9 487.4 L194.4 481.8" stroke="#ececf4" stroke-width="1" stroke-opacity=".9"/>
<path d="M203.0 491.6 L205.9 486.6" stroke="#ececf4" stroke-width="1" stroke-opacity=".9"/>
<path d="M211.7 498.3 L215.8 494.2" stroke="#ececf4" stroke-width="1" stroke-opacity=".9"/>
<path d="M218.4 507.0 L223.4 504.1" stroke="#ececf4" stroke-width="1" stroke-opacity=".9"/>
<path d="M222.6 517.1 L228.2 515.6" stroke="#ececf4" stroke-width="1" stroke-opacity=".9"/>
<path d="M224.0 528.0 L229.8 528.0" stroke="#ececf4" stroke-width="1" stroke-opacity=".9"/>
<path d="M222.6 538.9 L228.2 540.4" stroke="#ececf4" stroke-width="1" stroke-opacity=".9"/>
<path d="M218.4 549.0 L223.4 551.9" stroke="#ececf4" stroke-width="1" stroke-opacity=".9"/>
<path d="M211.7 557.7 L215.8 561.8" stroke="#ececf4" stroke-width="1" stroke-opacity=".9"/>
<text x="177" y="499.5" font-size="16" fill="#fff">0</text>
<text x="152" y="548.8" font-size="16" fill="#fff">-240</text>
<text x="192" y="548.8" font-size="16" fill="#fff">240</text>
<circle cx="181.7" cy="527.8" r="6.300" fill="#e4e4e4" stroke="#c01818" stroke-width=".9"/>
<path d="M183.6 527.8 L182.4 487.3 L181.0 487.3 L179.8 527.8 A1.9 1.9 0 0 0 183.6 527.8 Z" fill="#ff0000"/>
</g>
<g clip-path="url(#cs)">
<circle cx="302" cy="528" r="58.500" fill="#a8a8ac"/>
<circle cx="302" cy="528" r="57.100" fill="#d8d8da"/>
<circle cx="302.3" cy="528.3" r="54.800" fill="#fcfcfc"/>
<circle cx="302" cy="528" r="52" fill="#c4c4c8"/>
<circle cx="302" cy="528" r="50.800" fill="#0b0b0b"/>
<circle cx="302" cy="528" r="46.500" fill="url(#sface)"/>
<path d="M262.99 552.38 A46 46 0 1 1 341.01 552.38 L332.11 546.81 A35.5 35.5 0 1 0 271.89 546.81 Z" fill="#2b2b2b"/>
<path d="M274.8 555.2 L269.3 560.7" stroke="#0a0a0a" stroke-width="1.600"/>
<path d="M272.3 557.7 L268.2 561.8" stroke="#b4b4dc" stroke-width=".8" stroke-opacity=".55"/>
<path d="M271.5 551.4 L265.3 556.2" stroke="#0a0a0a" stroke-width="1.800" stroke-opacity=".85"/>
<path d="M268.7 547.2 L261.9 551.1" stroke="#0a0a0a" stroke-width="1.600"/>
<path d="M265.6 549.0 L260.6 551.9" stroke="#b4b4dc" stroke-width=".8" stroke-opacity=".55"/>
<path d="M266.4 542.7 L259.2 545.7" stroke="#0a0a0a" stroke-width="1.800" stroke-opacity=".85"/>
<path d="M264.8 538.0 L257.3 540.0" stroke="#0a0a0a" stroke-width="1.600"/>
<path d="M261.4 538.9 L255.8 540.4" stroke="#b4b4dc" stroke-width=".8" stroke-opacity=".55"/>
<path d="M263.8 533.0 L256.1 534.0" stroke="#0a0a0a" stroke-width="1.800" stroke-opacity=".85"/>
<path d="M263.5 528.0 L255.7 528.0" stroke="#0a0a0a" stroke-width="1.600"/>
<path d="M260.0 528.0 L254.2 528.0" stroke="#b4b4dc" stroke-width=".8" stroke-opacity=".55"/>
<path d="M263.8 523.0 L256.1 522.0" stroke="#0a0a0a" stroke-width="1.800" stroke-opacity=".85"/>
<path d="M264.8 518.0 L257.3 516.0" stroke="#0a0a0a" stroke-width="1.600"/>
<path d="M261.4 517.1 L255.8 515.6" stroke="#b4b4dc" stroke-width=".8" stroke-opacity=".55"/>
<path d="M266.4 513.3 L259.2 510.3" stroke="#0a0a0a" stroke-width="1.800" stroke-opacity=".85"/>
<path d="M268.7 508.8 L261.9 504.9" stroke="#0a0a0a" stroke-width="1.600"/>
<path d="M265.6 507.0 L260.6 504.1" stroke="#b4b4dc" stroke-width=".8" stroke-opacity=".55"/>
<path d="M271.5 504.6 L265.3 499.8" stroke="#0a0a0a" stroke-width="1.800" stroke-opacity=".85"/>
<path d="M274.8 500.8 L269.3 495.3" stroke="#0a0a0a" stroke-width="1.600"/>
<path d="M272.3 498.3 L268.2 494.2" stroke="#b4b4dc" stroke-width=".8" stroke-opacity=".55"/>
<path d="M278.6 497.5 L273.8 491.3" stroke="#0a0a0a" stroke-width="1.800" stroke-opacity=".85"/>
<path d="M282.8 494.7 L278.9 487.9" stroke="#0a0a0a" stroke-width="1.600"/>
<path d="M281.0 491.6 L278.1 486.6" stroke="#b4b4dc" stroke-width=".8" stroke-opacity=".55"/>
<path d="M287.3 492.4 L284.3 485.2" stroke="#0a0a0a" stroke-width="1.800" stroke-opacity=".85"/>
<path d="M292.0 490.8 L290.0 483.3" stroke="#0a0a0a" stroke-width="1.600"/>
<path d="M291.1 487.4 L289.6 481.8" stroke="#b4b4dc" stroke-width=".8" stroke-opacity=".55"/>
<path d="M297.0 489.8 L296.0 482.1" stroke="#0a0a0a" stroke-width="1.800" stroke-opacity=".85"/>
<path d="M302.0 489.5 L302.0 481.7" stroke="#0a0a0a" stroke-width="1.600"/>
<path d="M302.0 486.0 L302.0 480.2" stroke="#b4b4dc" stroke-width=".8" stroke-opacity=".55"/>
<path d="M307.0 489.8 L308.0 482.1" stroke="#0a0a0a" stroke-width="1.800" stroke-opacity=".85"/>
<path d="M312.9 487.4 L314.4 481.8" stroke="#ececf4" stroke-width="1" stroke-opacity=".9"/>
<path d="M323.0 491.6 L325.9 486.6" stroke="#ececf4" stroke-width="1" stroke-opacity=".9"/>
<path d="M331.7 498.3 L335.8 494.2" stroke="#ececf4" stroke-width="1" stroke-opacity=".9"/>
<path d="M338.4 507.0 L343.4 504.1" stroke="#ececf4" stroke-width="1" stroke-opacity=".9"/>
<path d="M342.6 517.1 L348.2 515.6" stroke="#ececf4" stroke-width="1" stroke-opacity=".9"/>
<path d="M344.0 528.0 L349.8 528.0" stroke="#ececf4" stroke-width="1" stroke-opacity=".9"/>
<path d="M342.6 538.9 L348.2 540.4" stroke="#ececf4" stroke-width="1" stroke-opacity=".9"/>
<path d="M338.4 549.0 L343.4 551.9" stroke="#ececf4" stroke-width="1" stroke-opacity=".9"/>
<path d="M331.7 557.7 L335.8 561.8" stroke="#ececf4" stroke-width="1" stroke-opacity=".9"/>
<text x="272.3" y="548.8" font-size="16" fill="#fff">0</text>
<text x="312.5" y="548.8" font-size="16" fill="#fff">256</text>
<circle cx="301.7" cy="527.8" r="6.300" fill="#e4e4e4" stroke="#c01818" stroke-width=".9"/>
<path d="M300.2 525.2 L265.5 549.2 L265.9 549.7 L303.2 530.4 A3.0 3.0 0 0 0 300.2 525.2 Z" fill="#ff0000"/>
</g>
<g clip-path="url(#cs)">
<circle cx="582" cy="528" r="58.500" fill="#a8a8ac"/>
<circle cx="582" cy="528" r="57.100" fill="#d8d8da"/>
<circle cx="582.3" cy="528.3" r="54.800" fill="#fcfcfc"/>
<circle cx="582" cy="528" r="52" fill="#c4c4c8"/>
<circle cx="582" cy="528" r="50.800" fill="#0b0b0b"/>
<circle cx="582" cy="528" r="46.500" fill="url(#sface)"/>
<path d="M542.99 552.38 A46 46 0 1 1 621.01 552.38 L612.11 546.81 A35.5 35.5 0 1 0 551.89 546.81 Z" fill="#2b2b2b"/>
<path d="M554.8 555.2 L549.3 560.7" stroke="#0a0a0a" stroke-width="1.600"/>
<path d="M552.3 557.7 L548.2 561.8" stroke="#b4b4dc" stroke-width=".8" stroke-opacity=".55"/>
<path d="M551.5 551.4 L545.3 556.2" stroke="#0a0a0a" stroke-width="1.800" stroke-opacity=".85"/>
<path d="M548.7 547.2 L541.9 551.1" stroke="#0a0a0a" stroke-width="1.600"/>
<path d="M545.6 549.0 L540.6 551.9" stroke="#b4b4dc" stroke-width=".8" stroke-opacity=".55"/>
<path d="M546.4 542.7 L539.2 545.7" stroke="#0a0a0a" stroke-width="1.800" stroke-opacity=".85"/>
<path d="M544.8 538.0 L537.3 540.0" stroke="#0a0a0a" stroke-width="1.600"/>
<path d="M541.4 538.9 L535.8 540.4" stroke="#b4b4dc" stroke-width=".8" stroke-opacity=".55"/>
<path d="M543.8 533.0 L536.1 534.0" stroke="#0a0a0a" stroke-width="1.800" stroke-opacity=".85"/>
<path d="M543.5 528.0 L535.7 528.0" stroke="#0a0a0a" stroke-width="1.600"/>
<path d="M540.0 528.0 L534.2 528.0" stroke="#b4b4dc" stroke-width=".8" stroke-opacity=".55"/>
<path d="M543.8 523.0 L536.1 522.0" stroke="#0a0a0a" stroke-width="1.800" stroke-opacity=".85"/>
<path d="M544.8 518.0 L537.3 516.0" stroke="#0a0a0a" stroke-width="1.600"/>
<path d="M541.4 517.1 L535.8 515.6" stroke="#b4b4dc" stroke-width=".8" stroke-opacity=".55"/>
<path d="M546.4 513.3 L539.2 510.3" stroke="#0a0a0a" stroke-width="1.800" stroke-opacity=".85"/>
<path d="M548.7 508.8 L541.9 504.9" stroke="#0a0a0a" stroke-width="1.600"/>
<path d="M545.6 507.0 L540.6 504.1" stroke="#b4b4dc" stroke-width=".8" stroke-opacity=".55"/>
<path d="M551.5 504.6 L545.3 499.8" stroke="#0a0a0a" stroke-width="1.800" stroke-opacity=".85"/>
<path d="M554.8 500.8 L549.3 495.3" stroke="#0a0a0a" stroke-width="1.600"/>
<path d="M552.3 498.3 L548.2 494.2" stroke="#b4b4dc" stroke-width=".8" stroke-opacity=".55"/>
<path d="M558.6 497.5 L553.8 491.3" stroke="#0a0a0a" stroke-width="1.800" stroke-opacity=".85"/>
<path d="M562.8 494.7 L558.9 487.9" stroke="#0a0a0a" stroke-width="1.600"/>
<path d="M561.0 491.6 L558.1 486.6" stroke="#b4b4dc" stroke-width=".8" stroke-opacity=".55"/>
<path d="M567.3 492.4 L564.3 485.2" stroke="#0a0a0a" stroke-width="1.800" stroke-opacity=".85"/>
<path d="M572.0 490.8 L570.0 483.3" stroke="#0a0a0a" stroke-width="1.600"/>
<path d="M571.1 487.4 L569.6 481.8" stroke="#b4b4dc" stroke-width=".8" stroke-opacity=".55"/>
<path d="M577.0 489.8 L576.0 482.1" stroke="#0a0a0a" stroke-width="1.800" stroke-opacity=".85"/>
<path d="M582.0 489.5 L582.0 481.7" stroke="#0a0a0a" stroke-width="1.600"/>
<path d="M582.0 486.0 L582.0 480.2" stroke="#b4b4dc" stroke-width=".8" stroke-opacity=".55"/>
<path d="M587.0 489.8 L588.0 482.1" stroke="#0a0a0a" stroke-width="1.800" stroke-opacity=".85"/>
<path d="M592.9 487.4 L594.4 481.8" stroke="#ececf4" stroke-width="1" stroke-opacity=".9"/>
<path d="M603.0 491.6 L605.9 486.6" stroke="#ececf4" stroke-width="1" stroke-opacity=".9"/>
<path d="M611.7 498.3 L615.8 494.2" stroke="#ececf4" stroke-width="1" stroke-opacity=".9"/>
<path d="M618.4 507.0 L623.4 504.1" stroke="#ececf4" stroke-width="1" stroke-opacity=".9"/>
<path d="M622.6 517.1 L628.2 515.6" stroke="#ececf4" stroke-width="1" stroke-opacity=".9"/>
<path d="M624.0 528.0 L629.8 528.0" stroke="#ececf4" stroke-width="1" stroke-opacity=".9"/>
<path d="M622.6 538.9 L628.2 540.4" stroke="#ececf4" stroke-width="1" stroke-opacity=".9"/>
<path d="M618.4 549.0 L623.4 551.9" stroke="#ececf4" stroke-width="1" stroke-opacity=".9"/>
<path d="M611.7 557.7 L615.8 561.8" stroke="#ececf4" stroke-width="1" stroke-opacity=".9"/>
<text x="552.3" y="548.8" font-size="16" fill="#fff">0</text>
<text x="591.7" y="548.8" font-size="16" fill="#fff">600</text>
<circle cx="581.7" cy="527.8" r="6.300" fill="#e4e4e4" stroke="#c01818" stroke-width=".9"/>
<path d="M580.2 525.2 L545.5 549.2 L545.9 549.7 L583.2 530.4 A3.0 3.0 0 0 0 580.2 525.2 Z" fill="#ff0000"/>
</g>
<g clip-path="url(#cs)">
<circle cx="702" cy="528" r="58.500" fill="#a8a8ac"/>
<circle cx="702" cy="528" r="57.100" fill="#d8d8da"/>
<circle cx="702.3" cy="528.3" r="54.800" fill="#fcfcfc"/>
<circle cx="702" cy="528" r="52" fill="#c4c4c8"/>
<circle cx="702" cy="528" r="50.800" fill="#0b0b0b"/>
<circle cx="702" cy="528" r="46.500" fill="url(#sface)"/>
<path d="M662.99 552.38 A46 46 0 1 1 741.01 552.38 L732.11 546.81 A35.5 35.5 0 1 0 671.89 546.81 Z" fill="#2b2b2b"/>
<path d="M674.8 555.2 L669.3 560.7" stroke="#0a0a0a" stroke-width="1.600"/>
<path d="M672.3 557.7 L668.2 561.8" stroke="#b4b4dc" stroke-width=".8" stroke-opacity=".55"/>
<path d="M671.5 551.4 L665.3 556.2" stroke="#0a0a0a" stroke-width="1.800" stroke-opacity=".85"/>
<path d="M668.7 547.2 L661.9 551.1" stroke="#0a0a0a" stroke-width="1.600"/>
<path d="M665.6 549.0 L660.6 551.9" stroke="#b4b4dc" stroke-width=".8" stroke-opacity=".55"/>
<path d="M666.4 542.7 L659.2 545.7" stroke="#0a0a0a" stroke-width="1.800" stroke-opacity=".85"/>
<path d="M664.8 538.0 L657.3 540.0" stroke="#0a0a0a" stroke-width="1.600"/>
<path d="M661.4 538.9 L655.8 540.4" stroke="#b4b4dc" stroke-width=".8" stroke-opacity=".55"/>
<path d="M663.8 533.0 L656.1 534.0" stroke="#0a0a0a" stroke-width="1.800" stroke-opacity=".85"/>
<path d="M663.5 528.0 L655.7 528.0" stroke="#0a0a0a" stroke-width="1.600"/>
<path d="M660.0 528.0 L654.2 528.0" stroke="#b4b4dc" stroke-width=".8" stroke-opacity=".55"/>
<path d="M663.8 523.0 L656.1 522.0" stroke="#0a0a0a" stroke-width="1.800" stroke-opacity=".85"/>
<path d="M664.8 518.0 L657.3 516.0" stroke="#0a0a0a" stroke-width="1.600"/>
<path d="M661.4 517.1 L655.8 515.6" stroke="#b4b4dc" stroke-width=".8" stroke-opacity=".55"/>
<path d="M666.4 513.3 L659.2 510.3" stroke="#0a0a0a" stroke-width="1.800" stroke-opacity=".85"/>
<path d="M668.7 508.8 L661.9 504.9" stroke="#0a0a0a" stroke-width="1.600"/>
<path d="M665.6 507.0 L660.6 504.1" stroke="#b4b4dc" stroke-width=".8" stroke-opacity=".55"/>
<path d="M671.5 504.6 L665.3 499.8" stroke="#0a0a0a" stroke-width="1.800" stroke-opacity=".85"/>
<path d="M674.8 500.8 L669.3 495.3" stroke="#0a0a0a" stroke-width="1.600"/>
<path d="M672.3 498.3 L668.2 494.2" stroke="#b4b4dc" stroke-width=".8" stroke-opacity=".55"/>
<path d="M678.6 497.5 L673.8 491.3" stroke="#0a0a0a" stroke-width="1.800" stroke-opacity=".85"/>
<path d="M682.8 494.7 L678.9 487.9" stroke="#0a0a0a" stroke-width="1.600"/>
<path d="M681.0 491.6 L678.1 486.6" stroke="#b4b4dc" stroke-width=".8" stroke-opacity=".55"/>
<path d="M687.3 492.4 L684.3 485.2" stroke="#0a0a0a" stroke-width="1.800" stroke-opacity=".85"/>
<path d="M692.0 490.8 L690.0 483.3" stroke="#0a0a0a" stroke-width="1.600"/>
<path d="M691.1 487.4 L689.6 481.8" stroke="#b4b4dc" stroke-width=".8" stroke-opacity=".55"/>
<path d="M697.0 489.8 L696.0 482.1" stroke="#0a0a0a" stroke-width="1.800" stroke-opacity=".85"/>
<path d="M702.0 489.5 L702.0 481.7" stroke="#0a0a0a" stroke-width="1.600"/>
<path d="M702.0 486.0 L702.0 480.2" stroke="#b4b4dc" stroke-width=".8" stroke-opacity=".55"/>
<path d="M707.0 489.8 L708.0 482.1" stroke="#0a0a0a" stroke-width="1.800" stroke-opacity=".85"/>
<path d="M712.9 487.4 L714.4 481.8" stroke="#ececf4" stroke-width="1" stroke-opacity=".9"/>
<path d="M723.0 491.6 L725.9 486.6" stroke="#ececf4" stroke-width="1" stroke-opacity=".9"/>
<path d="M731.7 498.3 L735.8 494.2" stroke="#ececf4" stroke-width="1" stroke-opacity=".9"/>
<path d="M738.4 507.0 L743.4 504.1" stroke="#ececf4" stroke-width="1" stroke-opacity=".9"/>
<path d="M742.6 517.1 L748.2 515.6" stroke="#ececf4" stroke-width="1" stroke-opacity=".9"/>
<path d="M744.0 528.0 L749.8 528.0" stroke="#ececf4" stroke-width="1" stroke-opacity=".9"/>
<path d="M742.6 538.9 L748.2 540.4" stroke="#ececf4" stroke-width="1" stroke-opacity=".9"/>
<path d="M738.4 549.0 L743.4 551.9" stroke="#ececf4" stroke-width="1" stroke-opacity=".9"/>
<path d="M731.7 557.7 L735.8 561.8" stroke="#ececf4" stroke-width="1" stroke-opacity=".9"/>
<text x="672.3" y="548.8" font-size="16" fill="#fff">0</text>
<text x="711.7" y="548.8" font-size="16" fill="#fff">600</text>
<circle cx="701.7" cy="527.8" r="6.300" fill="#e4e4e4" stroke="#c01818" stroke-width=".9"/>
<path d="M700.2 525.2 L665.5 549.2 L665.9 549.7 L703.2 530.4 A3.0 3.0 0 0 0 700.2 525.2 Z" fill="#ff0000"/>
</g>
<rect x="322.500" y="268.500" width="59" height="79" fill="#fff" stroke="#c4c4c4" stroke-width="1"/>
<text x="351" y="317" text-anchor="middle" font-size="37.500" font-weight="bold" fill="#00a2e8" textLength="30.700" lengthAdjust="spacingAndGlyphs">N</text>
<circle cx="412" cy="306.500" r="21.200" fill="none" stroke="#b97a57" stroke-width="5.200"/>
<text x="413.400" y="320.600" text-anchor="middle" font-size="37.500" font-weight="bold" fill="#b97a57" textLength="22.200" lengthAdjust="spacingAndGlyphs">P</text>
<circle cx="411.100" cy="507.100" r="28.500" fill="#fff" stroke="#c8c8c8" stroke-width="1"/>
<text x="411" y="519.500" text-anchor="middle" font-family="Liberation Sans, Noto Sans CJK SC, sans-serif" font-size="35" font-weight="bold" fill="#c3c3c3">停</text>
<circle cx="472" cy="506.500" r="21.500" fill="#fff" stroke="#ed1c24" stroke-width="4.400"/>
<path d="M457 491.500 L487 521.500 M487 491.500 L457 521.500" stroke="#ed1c24" stroke-width="5.600"/>
<rect x="382" y="538" width="120" height="40" fill="#22b14c"/>
<text x="442.700" y="571.300" text-anchor="middle" font-size="37" font-weight="bold" fill="#fff" textLength="92.500" lengthAdjust="spacingAndGlyphs">HALL</text></svg>
<span class="a16 yel" style="left:167.6px;top:369.2px">0W</span>
<div style="left:121.7px;top:389.0px;width:90.7px;height:19px;overflow:hidden"><span class="a16 wht" style="left:45.3px;top:0;transform:translateX(-50%)">Power*1000W</span></div>
<span class="a16 yel" style="left:605.9px;top:369.2px">0rpm</span>
<div style="left:561.700px;top:389.0px;width:90.600px;height:19px;overflow:hidden"><span class="a16 wht" style="left:10.300px;top:0;letter-spacing:-0.15px">Speed * 100</span></div>
<div style="left:332px;top:249.1px;width:100.6px;height:19px;overflow:hidden"><span class="a16 blue" style="left:49.6px;top:0;transform:translateX(-50%)">Motor Temp0¡ã</span></div>
<div style="left:332px;top:449.09999999999997px;width:100.6px;height:19px;overflow:hidden"><span class="a16 blue" style="left:49.6px;top:0;transform:translateX(-50%)">Controller Temp4¡ã</span></div>
<span class="a16 blue" style="left:11.8px;top:568.6px">Voltage79.4V</span>
<span class="a16 blue" style="left:151.2px;top:568.6px;letter-spacing:-0.29px">Current0A</span>
<span class="a16 blue" style="left:276.8px;top:568.6px;letter-spacing:-0.37px">Throttle0</span>
<span class="a16 blue" style="left:532.5px;top:568.6px">A-Phase0.0A</span>
<span class="a16 blue" style="left:651.6px;top:568.6px">C-Phase0.0A</span>
<span class="a16 blue" style="left:21.3px;top:599.0px">Received Frame300 Code0</span>
<div style="left:22px;top:618.8px;width:1138px;height:19px;overflow:hidden"><span class="a16 red" style="left:0;top:0;letter-spacing:-0.233px">Syetem OK²Ù×÷ÃÜÂë´í²Ù×÷ÃÜÂë´í²Ù×÷ÃÜÂë´í²Ù×÷ÃÜÂë´í²Ù×÷ÃÜÂë´í²Ù×÷ÃÜÂë´í²Ù×÷ÃÜÂë´í²Ù×÷ÃÜÂë´í²Ù×÷ÃÜÂë´í²Ù×÷ÃÜÂë´í²Ù×÷ÃÜÂë´í²Ù×÷ÃÜÂë´í²Ù×÷ÃÜÂë´í²Ù×÷ÃÜÂë´í²Ù×÷ÃÜÂë´í</span></div>
</div></div>
<div id="pcap"></div><div id="pedit"></div><div id="ptool"></div>
<span class="t" style="left:1170px;top:147.600px;transform:scaleX(.75);transform-origin:0 0">?????</span><span class="t blk" style="left:1171px;top:168.5px;letter-spacing:0.13px">ÐÂ²ÎÊýÎÄ¼þ</span>
<svg style="left:1330px;top:148px" width="36" height="16" viewBox="0 0 36 16">
<path d="M7.500 4.500 H11.500 M8.500 4.500 V9.500 M10.500 4.500 V9.500 M11 4.500 V9.500 M6.500 9.500 H12.500 M9.500 9.500 V12.500" stroke="#15428b" stroke-width="1" fill="none"/>
<path d="M22.500 4.500 L29.500 11.500 M29.500 4.500 L22.500 11.500" stroke="#15428b" stroke-width="1.300" fill="none"/>
</svg>
<svg style="left:1166px;top:186px;z-index:3" width="100" height="22" viewBox="0 0 100 22">
<g fill="#fff" stroke="#6a9cd4" stroke-width="1"><rect x="5.500" y="4.500" width="6" height="6" rx="1.200"/><rect x="5.500" y="13.500" width="6" height="5.500" rx="1.200"/></g>
<path d="M6.800 7.500 H10.200 M8.500 5.800 V9.200 M6.800 16.300 H10.200 M8.500 14.600 V18" stroke="#000" stroke-width="1.200"/>
<path d="M13 6.500 H17 M13 17.500 H17" stroke="#4a4a4a" stroke-width="1.200"/>
<path d="M13.500 8.500 H21.500 M13.500 10.500 H21.500 M13.500 12.500 H21.500 M13.500 14.500 H21.500" stroke="#8a9a8a" stroke-width="1" stroke-dasharray="3.200 1.600"/>
<text x="27.800" y="11" font-family="Liberation Serif, serif" font-weight="bold" font-size="10.500" fill="#3a5aa8">A</text>
<text x="28.200" y="19" font-family="Liberation Serif, serif" font-weight="bold" font-size="10.500" fill="#a83a30">Z</text>
<path d="M40.500 4 V17" stroke="#000" stroke-width="1.200"/><path d="M38 14.200 H43 L40.500 18.800 Z" fill="#000"/>
<rect x="71.500" y="4.600" width="15.300" height="14.300" fill="#fff" stroke="#0000ff" stroke-width="1.200"/>
<path d="M76.200 5.200 H81.600 V12 H86.200 L79 18.500 L72.100 12 H76.200 Z" fill="#ff0000"/>
<path d="M72.100 18.200 H86.200" stroke="#ff0000" stroke-width="1"/>
</svg>
<div id="pgrid">
<div class="pbox plus" style="left:5px;top:5px"></div><span class="t gh" style="left:23.6px;top:1.5px;letter-spacing:-0.49px">Paras</span>
<div class="pbox" style="left:5px;top:24px"></div><span class="t gh" style="left:23.6px;top:20.5px;letter-spacing:0.01px">Status</span>
<div class="prow" style="top:39px"><b></b></div><span class="t blk" style="left:23.6px;top:39.5px;letter-spacing:-0.47px">Gear</span>
<span class="t blk" style="left:105.4px;top:39.5px;letter-spacing:0.16px">Empty</span>
<div class="prow" style="top:58px"><b></b></div><span class="t blk" style="left:23.6px;top:58.5px;letter-spacing:-0.05px">Roll</span>
<span class="t blk" style="left:105.4px;top:58.5px;letter-spacing:-0.02px">Stop</span>
<div class="prow" style="top:77px"><b></b></div><span class="t blk" style="left:23.6px;top:77.5px;letter-spacing:-0.10px">FOC Temp</span>
<span class="t blk" style="left:105.4px;top:77.5px;letter-spacing:-0.48px">4¡æ</span>
<div class="prow" style="top:96px"><b></b></div><span class="t blk" style="left:23.6px;top:96.5px;letter-spacing:0.10px">Throttle Vol</span>
<span class="t blk" style="left:105.4px;top:96.5px;letter-spacing:-0.63px">0.88V</span>
<div class="prow" style="top:115px"><b></b></div><span class="t blk" style="left:23.6px;top:115.5px;letter-spacing:-0.80px">POS</span>
<span class="t blk" style="left:105.4px;top:115.5px;letter-spacing:-0.33px">0.0</span>
<div class="prow" style="top:134px"><b></b></div><span class="t blk" style="left:23.6px;top:134.5px;letter-spacing:0.24px">Mod Ratio</span>
<span class="t blk" style="left:105.4px;top:134.5px;letter-spacing:-0.37px">0.00</span>
<div class="prow" style="top:153px"><b></b></div><span class="t blk" style="left:23.6px;top:153.5px;letter-spacing:0.05px">1Time</span>
<span class="t blk" style="left:105.4px;top:153.5px;letter-spacing:-0.29px">21.00us</span>
<div class="prow" style="top:172px"><b></b></div><span class="t blk" style="left:23.6px;top:172.5px;letter-spacing:-0.14px">MaxIS</span>
<span class="t blk" style="left:105.4px;top:172.5px;letter-spacing:-0.46px">625.0</span>
<div class="prow" style="top:191px"><b></b></div><span class="t blk" style="left:23.6px;top:191.5px;letter-spacing:-0.10px">HALL</span>
<span class="t blk" style="left:105.4px;top:191.5px;letter-spacing:-0.50px">100</span>
<div class="prow" style="top:210px"><b></b></div><span class="t blk" style="left:23.6px;top:210.5px;letter-spacing:0.05px">Zero Line</span>
<span class="t blk" style="left:105.4px;top:210.5px;letter-spacing:-1.21px">0</span>
<div class="prow" style="top:229px"><b></b></div><span class="t blk" style="left:23.6px;top:229.5px;letter-spacing:-0.08px">Zero Phase A</span>
<span class="t blk" style="left:105.4px;top:229.5px;letter-spacing:-0.37px">2097</span>
<div class="prow" style="top:248px"><b></b></div><span class="t blk" style="left:23.6px;top:248.5px;letter-spacing:-0.19px">Zero Phase C</span>
<span class="t blk" style="left:105.4px;top:248.5px;letter-spacing:-0.37px">2098</span>
<div class="prow" style="top:267px"><b></b></div><span class="t blk" style="left:23.6px;top:267.5px;letter-spacing:0.11px">Time</span>
<span class="t blk" style="left:105.4px;top:267.5px;letter-spacing:-0.33px">197us</span>
<div class="pbox" style="left:5px;top:290px"></div><span class="t gh" style="left:23.6px;top:286.5px;letter-spacing:-0.07px">ErrorCount</span>
<div class="prow" style="top:305px"><b></b></div><span class="t blk" style="left:23.6px;top:305.5px;letter-spacing:-0.20px">MOE</span>
<span class="t blk" style="left:105.4px;top:305.5px;letter-spacing:-1.21px">0</span>
<div class="prow" style="top:324px"><b></b></div><span class="t blk" style="left:23.6px;top:324.5px;letter-spacing:-0.44px">LINE</span>
<span class="t blk" style="left:105.4px;top:324.5px;letter-spacing:-1.21px">0</span>
<div class="prow" style="top:343px"><b></b></div><span class="t blk" style="left:23.6px;top:343.5px;letter-spacing:-0.97px">OVER</span>
<span class="t blk" style="left:105.4px;top:343.5px;letter-spacing:-1.21px">0</span>
<div class="prow" style="top:362px"><b></b></div><span class="t blk" style="left:23.6px;top:362.5px;letter-spacing:-0.68px">PHASE</span>
<span class="t blk" style="left:105.4px;top:362.5px;letter-spacing:-1.21px">0</span>
<div class="prow" style="top:381px"><b></b></div><span class="t blk" style="left:23.6px;top:381.5px;letter-spacing:-0.50px">ANGLE</span>
<span class="t blk" style="left:105.4px;top:381.5px;letter-spacing:-1.21px">0</span>
<div class="prow" style="top:400px"><b></b></div><span class="t blk" style="left:23.6px;top:400.5px;letter-spacing:-0.44px">AB15</span>
<span class="t blk" style="left:105.4px;top:400.5px;letter-spacing:-1.21px">0</span>
<div class="prow" style="top:419px"><b></b></div><span class="t blk" style="left:23.6px;top:419.5px;letter-spacing:-0.62px">ABZ</span>
<span class="t blk" style="left:105.4px;top:419.5px;letter-spacing:-1.21px">0</span>
</div>
<div id="pscroll"><div class="sbtn" style="top:0;height:16px"></div><div class="sbtn" style="top:17px;height:214px"></div><div class="sbtn" style="top:412px;height:17px"></div>
<svg style="left:0;top:0" width="17" height="430"><path d="M4.500 10 H12.500 L8.500 6 Z M4.500 419 H12.500 L8.500 423 Z" fill="#000"/></svg></div>
<div id="pdesc"><i></i></div>
<div id="status"></div>
<span class="t " style="left:9.3px;top:707.6px;letter-spacing:-0.45px">Syetem OK</span>
<span class="t " style="left:64.1px;top:707.6px;letter-spacing:-0.04px">²Ù×÷ÃÜÂë´í²Ù×÷ÃÜÂë´í²Ù×÷ÃÜÂë´í²Ù×÷ÃÜÂë´í²Ù×÷ÃÜÂë´í²Ù×÷ÃÜÂë´í²Ù×÷ÃÜÂë´í²Ù×÷ÃÜÂë´í²Ù×÷ÃÜÂë´í²Ù×÷ÃÜÂë´í²Ù×÷ÃÜÂë´í²Ù×÷ÃÜÂë´í²Ù×÷ÃÜÂë´í</span>

<svg style="left:0;top:0" width="1366" height="56" viewBox="0 0 1366 56">
<defs>
<linearGradient id="orbg" x1="0" y1="0" x2="0" y2="1"><stop offset="0" stop-color="#eef1f6"/><stop offset=".5" stop-color="#e0e4ec"/><stop offset=".6" stop-color="#cdd3de"/><stop offset="1" stop-color="#fafbfd"/></linearGradient>
<linearGradient id="orbr" x1="0" y1="0" x2="0" y2="1"><stop offset="0" stop-color="#c4ccda"/><stop offset=".5" stop-color="#e8ebf1"/><stop offset="1" stop-color="#ffffff"/></linearGradient>
<linearGradient id="dia" x1="0" y1="0" x2="0" y2="1"><stop offset="0" stop-color="#ff0a0a"/><stop offset=".5" stop-color="#e80000"/><stop offset="1" stop-color="#b00000"/></linearGradient>
<linearGradient id="pg" x1="0" y1="0" x2="1" y2="1"><stop offset="0" stop-color="#ffffff"/><stop offset=".6" stop-color="#f4f6fb"/><stop offset="1" stop-color="#c9d2e6"/></linearGradient>
<linearGradient id="fold" x1="0" y1="0" x2="0" y2="1"><stop offset="0" stop-color="#fff0a8"/><stop offset="1" stop-color="#e8a820"/></linearGradient>
<linearGradient id="flop" x1="0" y1="0" x2="1" y2="1"><stop offset="0" stop-color="#7070e8"/><stop offset="1" stop-color="#2828a8"/></linearGradient>
<radialGradient id="hlp" cx=".4" cy=".3" r=".8"><stop offset="0" stop-color="#5a8af0"/><stop offset="1" stop-color="#0c2ca0"/></radialGradient>
</defs>
<!-- QAT -->
<path d="M38.5 5.5 H133 A10 10 0 0 1 133 25.500 H50 C45 25.500 46 10 38.500 5.500 Z" fill="#e9eef5" stroke="#a9b4c4" stroke-width="1"/>
<path d="M50 26.500 H133" stroke="#dfe5ee" stroke-width="1" fill="none"/>
<!-- orb -->
<circle cx="22" cy="24.300" r="18.400" fill="#d4dae4"/>
<circle cx="22" cy="24" r="17.800" fill="url(#orbr)" stroke="#8a98b2" stroke-width=".7"/>
<circle cx="22" cy="24" r="15.600" fill="url(#orbg)"/>
<path d="M22 11.800 L35.200 25 L22 38.200 L8.800 25 Z" fill="url(#dia)" stroke="#2a0000" stroke-width="1.100" stroke-linejoin="round"/>
<path d="M22 11.800 L28.600 18.400 L22 25 L15.400 18.400 Z" fill="#ff1a0a" fill-opacity=".6"/>
<path d="M22 25 L28.600 31.600 L22 38.200 L15.400 31.600 Z" fill="#6a0000" fill-opacity=".4"/>
<path d="M15.400 18.400 L28.600 31.600 M28.600 18.400 L15.400 31.600" stroke="#5a0000" stroke-width=".9" fill="none"/>
<!-- new doc -->
<path d="M55.500 9.500 H62.500 L65.500 12.500 V22.500 H55.500 Z" fill="url(#pg)" stroke="#2c4a78" stroke-width="1"/>
<path d="M62.500 9.500 V12.500 H65.500" fill="#dfe6f2" stroke="#2c4a78" stroke-width=".8"/>
<path d="M56 23.300 H66" stroke="#1c3460" stroke-width="1"/>
<!-- open folder -->
<path d="M74.500 22.500 V12 H79 L80.500 13.500 H86.500 V16" fill="#f4d070" stroke="#b08820" stroke-width="1"/>
<path d="M74.500 22.500 L78 15.500 H90 L86.500 22.500 Z" fill="url(#fold)" stroke="#a07818" stroke-width="1"/>
<path d="M75 23.200 H87" stroke="#3a3020" stroke-width="1"/>
<path d="M82.500 11 C84 8.500 87.500 8.500 89 11" fill="none" stroke="#3a5a9a" stroke-width="1.200"/>
<path d="M87.300 11.800 L90 12.200 L90 9.300 Z" fill="#3a5a9a"/>
<!-- save -->
<rect x="97.500" y="9.500" width="13" height="13" fill="url(#flop)" stroke="#2a2a90" stroke-width="1"/>
<rect x="100" y="10" width="8" height="6" fill="#ffffff"/>
<rect x="100" y="10" width="8" height="6" fill="#d0d4f4" fill-opacity=".5"/>
<rect x="101" y="18.500" width="6" height="4" fill="#181848"/>
<rect x="104.500" y="19.500" width="2" height="2.500" fill="#e8e8f8"/>
<!-- print -->
<rect x="122.500" y="8.500" width="6" height="6" fill="#ffffff" stroke="#6878a0" stroke-width="1"/>
<path d="M119 13.500 H133 Q134 13.500 134 14.500 V20 H118 V14.500 Q118 13.500 119 13.500 Z" fill="#b8bcc4" stroke="#70747c" stroke-width="1"/>
<rect x="118.500" y="17" width="15" height="3" fill="#8c9098"/>
<rect x="125" y="15" width="4" height="1.400" fill="#58a0e8"/>
<rect x="122.500" y="18.500" width="6" height="5" fill="#ffffff" stroke="#6878a0" stroke-width="1"/>
<rect x="125" y="20" width="1.500" height="1.500" fill="#4060d0"/>
<circle cx="130" cy="11" r="3" fill="#3aa83a" stroke="#1c7a1c" stroke-width=".6"/>
<path d="M128.500 11 L129.700 12.300 L131.600 9.800" fill="none" stroke="#ffffff" stroke-width="1"/>
<!-- dropdown -->
<rect x="154" y="11.800" width="5" height="1.400" fill="#15428b"/>
<path d="M153.800 14.500 H159.200 L156.500 17.800 Z" fill="#15428b"/>
<!-- window controls -->
<path d="M1245 14.500 H1255" stroke="#000" stroke-width="1"/>
<rect x="1290.500" y="11.500" width="8" height="8" fill="none" stroke="#000" stroke-width="1"/>
<path d="M1292.500 11.500 V9.500 H1300.500 V17.500 H1298.500" fill="none" stroke="#000" stroke-width="1"/>
<path d="M1336 9 L1346 19 M1346 9 L1336 19" stroke="#000" stroke-width="1.100" fill="none"/>
<!-- format arrow -->
<path d="M1335.500 39.500 H1341.500 L1338.500 43 Z" fill="#5a7eb8"/>
<!-- help -->
<circle cx="1355" cy="41" r="7" fill="#ffffff" stroke="#b8c8e0" stroke-width=".8"/>
<circle cx="1355" cy="41" r="5.800" fill="url(#hlp)"/>
<text x="1355" y="45" font-family="Liberation Sans, sans-serif" font-size="11" font-weight="bold" fill="#ffffff" text-anchor="middle">?</text>
</svg>
</body></html>
